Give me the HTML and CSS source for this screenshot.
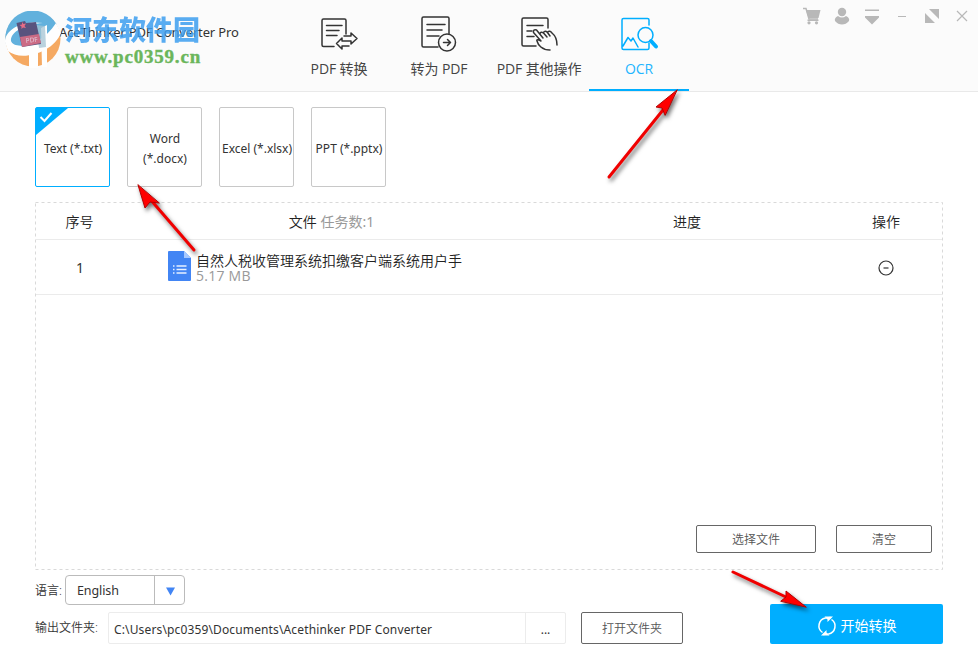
FILE: index.html
```html
<!DOCTYPE html>
<html lang="zh-CN">
<head>
<meta charset="utf-8">
<title>AceThinker PDF Converter Pro</title>
<link rel="stylesheet" href="styles.css">
</head>
<body>
<div class="window">
  <header class="header">
    <div class="brand"><span>AceThinker PDF Converter Pro</span></div>
    <nav class="tabs">
      <a class="tab">
        <svg class="tab-icon" viewBox="0 0 40 40"><path d="M26 19V5.500Q26 4 24.500 4H3.500Q2 4 2 5.500V30Q2 31.500 3.500 31.500H14M6.500 10.500H22M6.500 15.500H19M6.500 20.500H17"/><path d="M24 21H31V18L37 23.500 31 29V26H22V23L16.500 28.500 22 34V31H29"/></svg>
        <span>PDF 转换</span>
      </a>
      <a class="tab">
        <svg class="tab-icon" viewBox="0 0 40 40"><path d="M29 19V3.500Q29 2 27.500 2H3.500Q2 2 2 3.500V30.500Q2 32 3.500 32H18M7 9.500H25M7 15H22M7 21H19"/><circle cx="27" cy="27.500" r="8.500"/><path d="M23.500 27.500H30.500M27.500 24.500L30.500 27.500 27.500 30.500"/></svg>
        <span>转为 PDF</span>
      </a>
      <a class="tab">
        <svg class="tab-icon" viewBox="0 0 40 40"><path d="M28 13V4.500Q28 3 26.500 3H3.500Q2 3 2 4.500V29.500Q2 31 3.500 31H16M7 10.500H23M7 16H12M7 21.500H14"/><path d="M30 35C22 35 18 30 17 26Q16 23.500 21 26L13.500 17.500Q13 14 16.500 15L23 23M20 19Q20.500 16 23.500 18L27 22M23.500 17.500Q25 15 27.500 17.500L30 21M27.500 17Q30 15 32 18Q37 22 37 30"/></svg>
        <span>PDF 其他操作</span>
      </a>
      <a class="tab active">
        <svg class="tab-icon" viewBox="0 0 40 40"><path d="M29 10V5Q29 3.500 27.500 3.500H3.500Q2 3.500 2 5V33Q2 34.500 3.500 34.500H27.500Q29 34.500 29 33V28M3 31L8 22.500 11 26 13 23 18 32"/><circle cx="25.500" cy="20" r="7.500"/><path class="thick" d="M31 26L36 31.500"/></svg>
        <span>OCR</span>
      </a>
    </nav>
    <div class="controls">
      <svg class="control" viewBox="0 0 20 20"><path d="M1 2.500H4L7 13H16" fill="none" stroke="currentColor" stroke-width="1.500"/><path d="M4 4H18.500L16.500 12H6.500Z"/><path d="M5.500 13.500H16.500V15H5.500Z"/><circle cx="7" cy="16.800" r="1.600"/><circle cx="14.500" cy="16.800" r="1.600"/></svg>
      <svg class="control" viewBox="0 0 20 20"><circle cx="10" cy="6" r="4.200"/><path d="M6 10Q10 13 14 10Q18 12 17 15Q14 18.500 10 18.500T3 15Q2 12 6 10Z"/></svg>
      <svg class="control" viewBox="0 0 20 20"><path d="M3 3.500H17V5H3ZM3 10H17V11.500L10 18.500 3 11.500Z"/></svg>
      <svg class="control" viewBox="0 0 20 20"><path d="M6 10H14V11H6Z"/></svg>
      <svg class="control" viewBox="0 0 20 20"><path d="M7 3H17V13ZM3 7V17H13Z"/></svg>
      <svg class="control" viewBox="0 0 20 20"><path d="M5 5L15 15M15 5L5 15" fill="none" stroke="currentColor" stroke-width="1.200"/></svg>
    </div>
  </header>

  <main class="main">
    <div class="formats">
      <div class="format selected">Text (*.txt)<svg class="check" viewBox="0 0 32 27"><path class="corner" d="M0 0H32L0 27Z"/><path class="mark" d="M4.500 9L8.500 13 15.500 5"/></svg></div>
      <div class="format">Word<br>(*.docx)</div>
      <div class="format">Excel (*.xlsx)</div>
      <div class="format">PPT (*.pptx)</div>
    </div>

    <section class="panel">
      <svg class="panel-frame"><rect x="0.500" y="0.500" width="907" height="367"/></svg>
      <div class="row head">
        <div>序号</div><div>文件 <span class="muted">任务数:1</span></div><div>进度</div><div class="action">操作</div>
      </div>
      <div class="row item">
        <div class="number">1</div>
        <div class="file">
          <svg class="file-icon" viewBox="0 0 23 30"><path fill="#4285f4" d="M1 0H16L23 7V29Q23 30 22 30H1Q0 30 0 29V1Q0 0 1 0Z"/><path fill="#a6c8ff" d="M16 0L23 7H16Z"/><path d="M5 15H6.500M5 18.500H6.500M5 22H6.500M8.500 15H18.500M8.500 18.500H18.500M8.500 22H18.500" stroke="#e8f1ff" stroke-width="1.500"/></svg>
          <div class="file-info"><div class="file-name">自然人税收管理系统扣缴客户端系统用户手</div><div class="file-size">5.17 MB</div></div>
        </div>
        <div></div>
        <div class="action"><svg class="remove" viewBox="0 0 16 16"><circle cx="8" cy="8" r="7"/><path d="M5.500 8H10.500"/></svg></div>
      </div>
      <div class="panel-actions"><button class="btn choose">选择文件</button><button class="btn clear">清空</button></div>
    </section>

    <section class="bottom">
      <div class="settings">
        <div class="language"><label>语言:</label><div class="select"><span>English</span><i><svg viewBox="0 0 10 9"><path d="M0 0H10L5 9Z" fill="#4285f4"/></svg></i></div></div>
        <div class="output"><label>输出文件夹:</label><div class="path"><span>C:\Users\pc0359\Documents\Acethinker PDF Converter</span><i>...</i></div><button class="btn open">打开文件夹</button></div>
      </div>
      <button class="start"><svg viewBox="0 0 20 20"><path class="ring" d="M5.500 16.500A8 8 0 0 1 8.500 2L14 1.500M14.500 3.500A8 8 0 0 1 11.500 18L6 18.500"/><path d="M7.500 0.500H16L10.500 6V3.500ZM12.500 19.500H4L9.500 14V16.500Z"/></svg><span>开始转换</span></button>
    </section>
  </main>

  <div class="watermark">
    <svg class="wm-logo" viewBox="0 0 60 60">
      <circle cx="28" cy="28" r="27.500" fill="#f5a55a"/>
      <path d="M1 33A27.500 27.500 0 0 1 51.500 13C46 33 20 45 3 37Z" fill="#5aaedc"/>
      <path d="M0 31C0 18 18 9 38 12C20 13 5 21 6 30C9 39 36 36 51 12L56 22C48 42 16 51 3 40Z" fill="#fff"/>
      <path d="M24 43L33 41V57H24ZM36 17L42 14V56H37Z" fill="#fff"/>
      <path d="M31 14L40 15 41 36 34 37Z" fill="#9fc0d2" opacity=".75"/>
      <path d="M11.500 12L20 10 21 12 31 11 36 33 17 36Z" fill="#514b78"/>
      <path d="M15 26L34 23 36 32 17 36Z" fill="#c9647f"/>
      <path d="M17 11L18.500 13 21 12.500 19.500 15 21 17 18 16.500 16.500 18 16.500 15.500 14.500 14 17 13.500Z" fill="#e66580"/>
      <text x="21" y="32" font-size="6.500" fill="#e3c9da" transform="rotate(-7 21 32)">PDF</text>
    </svg>
    <div class="wm-text"><div class="wm-name">河东软件园</div><div class="wm-url">www.pc0359.cn</div></div>
  </div>

  <svg class="arrows" viewBox="0 0 978 668">
    <g><path d="M609 177L667 105" /><path class="tip" d="M677 90L656 107 662 108 665 115Z"/></g>
    <g><path d="M194 250L150 199"/><path class="tip" d="M138 185L145 208 150 202 159 203Z"/></g>
    <g><path d="M733 572L788 598"/><path class="tip" d="M806 607L786 591 786 597 781 601Z"/></g>
  </svg>
</div>
</body>
</html>
```
FILE: styles.css
```css
* { box-sizing: border-box; }
body { margin: 0; background: #fff; color: #333; font: 13px/20px "Noto Sans", "Noto Sans CJK SC", sans-serif; }
button { font: inherit; padding: 0; }
i { font-style: normal; }
.window { position: relative; width: 978px; height: 668px; overflow: hidden; }
.header { display: flex; height: 92px; background: #fbfbfb; border-bottom: 1px solid #e9e9e9; }
.brand { width: 289px; padding: 22px 0 0 59px; white-space: nowrap; color: #333; letter-spacing: -.16px; }
.tabs { display: flex; }
.tab { display: flex; flex-direction: column; align-items: center; width: 100px; height: 91px; padding-top: 14px; font: 14px/20px "Open Sans", "Noto Sans CJK SC", sans-serif; letter-spacing: -.1px; white-space: nowrap; color: #444; }
.tab-icon { width: 40px; height: 40px; margin: 1px 0 4px 1px; fill: none; stroke: #333; stroke-width: 1.5; stroke-linejoin: round; stroke-linecap: round; }
.active .tab-icon { stroke: #00aeff; }
.thick { stroke-width: 4; }
.tab.active { color: #22b5ff; border-bottom: 2px solid #00aeff; }
.controls { display: flex; gap: 10px; margin-left: auto; padding: 6px 6px 0 0; color: #b8b8b8; }
.control { width: 20px; height: 20px; fill: currentColor; }
.main { padding: 15px 35px 0; }
.formats { display: flex; gap: 17px; height: 80px; }
.format { position: relative; display: flex; align-items: center; justify-content: center; width: 75px; padding: 3px 0 0 1px; border: 1px solid #c8c8c8; border-radius: 2px; text-align: center; font-size: 12px; white-space: nowrap; }
.format.selected { border-color: #00aeff; }
.check { position: absolute; left: 0; top: 0; width: 32px; height: 27px; }
.corner { fill: #00aeff; }
.mark { fill: none; stroke: #fff; stroke-width: 2; }
.panel { position: relative; display: flex; flex-direction: column; width: 908px; height: 368px; margin-top: 15px; padding: 1px; }
.panel-frame { position: absolute; left: 0; top: 0; width: 908px; height: 368px; fill: none; stroke: #d9d9d9; stroke-dasharray: 3 3; }
.row { display: grid; grid-template-columns: 87px 417px 294px 108px; align-items: center; border-bottom: 1px solid #ebebeb; text-align: center; font-size: 14px; }
.head { height: 37px; padding-top: 2px; font-weight: 350; color: #222; }
.item { height: 55px; }
.number { padding: 1px 0 0 1px; }
.muted { color: #999; font-weight: 400; }
.action { padding-right: 4px; }
.file { display: flex; gap: 5px; align-self: start; padding: 11px 0 0 45px; text-align: left; }
.file-icon { width: 23px; height: 30px; }
.file-info { padding-top: 2px; white-space: nowrap; }
.file-name { font-size: 14px; line-height: 16px; font-weight: 350; color: #222; }
.file-size { font: 14px/14px "Open Sans", sans-serif; color: #999; letter-spacing: .25px; }
.remove { display: block; width: 16px; height: 16px; margin: 1px auto 0; fill: none; stroke: #333; stroke-width: 1.2; }
.panel-actions { display: flex; justify-content: flex-end; gap: 20px; margin-top: auto; padding: 0 10px 16px; }
.btn { padding-top: 2px; border: 1px solid #666; border-radius: 2px; background: #fff; font-size: 12px; font-weight: 350; color: #555; }
.choose { width: 120px; height: 28px; }
.clear { width: 96px; height: 28px; }
.bottom { display: flex; justify-content: space-between; align-items: flex-end; width: 908px; height: 74px; padding-top: 5px; }
.settings { font-size: 12px; }
.language, .output { display: flex; align-items: center; }
.language label { width: 30px; padding-top: 1px; font-weight: 350; white-space: nowrap; }
.select { display: flex; width: 120px; height: 30px; border: 1px solid #bbb; border-radius: 4px; }
.select span { flex: 1; padding: 5px 10px 0 11px; font-size: 12.500px; letter-spacing: -.1px; }
.select i { display: flex; align-items: center; justify-content: center; width: 30px; padding: 3px 0 0 1px; border-left: 1px solid #bbb; }
.select svg { width: 9px; height: 9px; }
.output { margin-top: 7px; }
.output label { width: 73px; font-weight: 350; white-space: nowrap; }
.path { display: flex; width: 458px; height: 32px; border: 1px solid #ececec; border-radius: 2px; line-height: 33px; }
.path span { flex: 1; padding-left: 5px; letter-spacing: .14px; }
.path i { width: 40px; border-left: 1px solid #ececec; text-align: center; }
.open { width: 102px; height: 32px; margin-left: 15px; }
.start { display: flex; align-items: center; justify-content: center; gap: 4px; width: 173px; height: 40px; padding-top: 3px; border: 0; border-radius: 2px; background: #00aeff; color: #fff; font-size: 14px; }
.start svg { width: 20px; height: 20px; fill: #fff; }
.ring { fill: none; stroke: #fff; stroke-width: 1.5; }
.watermark { position: absolute; left: 5px; top: 11px; display: flex; }
.wm-logo { width: 60px; height: 60px; opacity: .95; }
.wm-text { white-space: nowrap; }
.wm-name { height: 32px; font: 900 27px/35px "Noto Sans CJK SC", sans-serif; color: #3d9ff0; opacity: .85; }
.wm-url { font: bold 19px/28px "Liberation Serif", serif; color: #6bb65b; -webkit-text-stroke: .4px #6bb65b; letter-spacing: .8px; }
.arrows { position: absolute; left: 0; top: 0; width: 978px; height: 668px; pointer-events: none; filter: drop-shadow(2px 3px 2px rgba(0,0,0,.55)); }
.arrows path { fill: none; stroke: #f00000; stroke-width: 3; stroke-linecap: round; }
.arrows .tip { fill: #f00; stroke: #b30000; stroke-width: 1; }
```
